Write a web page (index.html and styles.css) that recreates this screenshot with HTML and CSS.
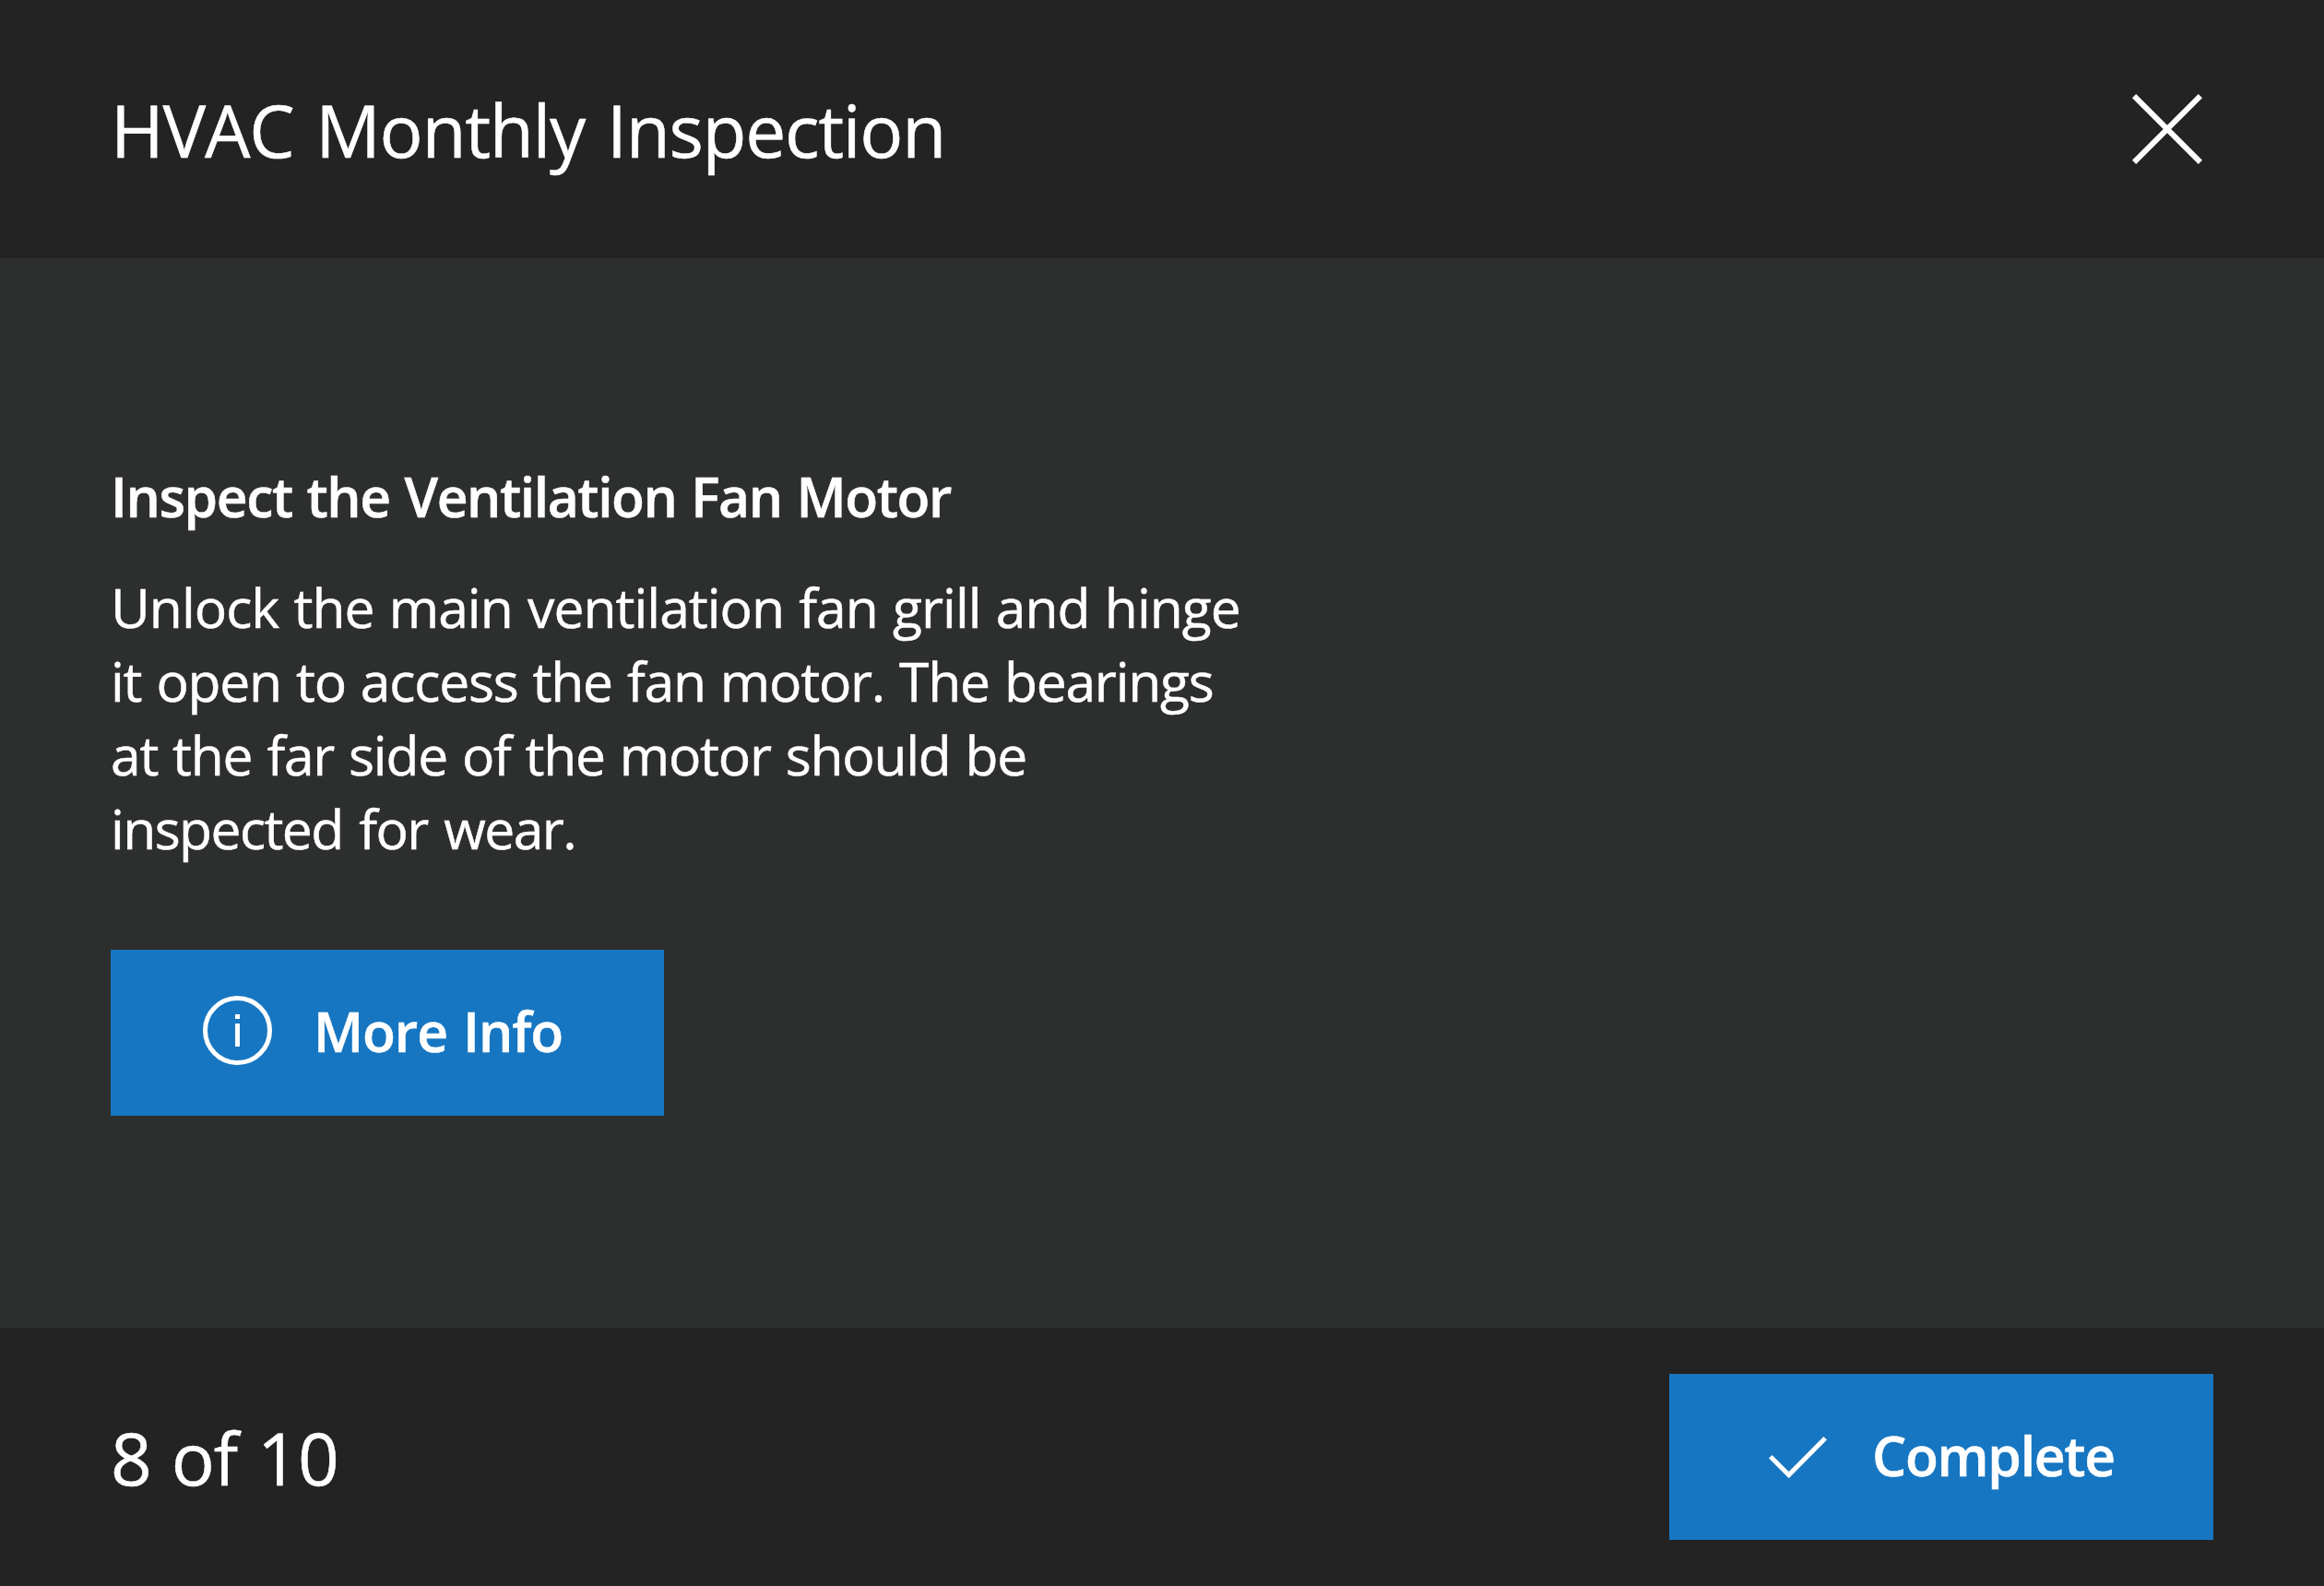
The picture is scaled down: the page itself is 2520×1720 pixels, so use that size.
FILE: index.html
```
<!DOCTYPE html>
<html lang="en">
<head>
<meta charset="utf-8">
<title>HVAC Monthly Inspection</title>
<link rel="stylesheet" href="styles.css">
</head>
<body>
<header class="bar">
  <h1 class="title">HVAC Monthly Inspection</h1>
  <button class="close" aria-label="Close"><svg width="76" height="76" viewBox="0 0 76 76"><path d="M2.100 2.100L73.900 73.900M73.900 2.100L2.100 73.900"/></svg></button>
</header>
<main class="content">
  <h2 class="step-title">Inspect the Ventilation Fan Motor</h2>
  <p class="description">
    <span class="line line-1">Unlock the main ventilation fan grill and hinge</span>
    <span class="line line-2">it open to access the fan motor. The bearings</span>
    <span class="line line-3">at the far side of the motor should be</span>
    <span class="line line-4">inspected for wear.</span>
  </p>
  <button class="action info"><svg width="75" height="75" viewBox="0 0 75 75"><circle cx="37.500" cy="37.500" r="35"/><path d="M37.500 20V25M37.500 30V55"/></svg><span class="label">More Info</span></button>
</main>
<footer class="bar">
  <span class="progress">8 of 10</span>
  <button class="action complete"><svg width="63" height="45" viewBox="0 0 63 45"><path d="M1.800 21.800L21.700 41.600L61.200 1.800"/></svg><span class="label">Complete</span></button>
</footer>
</body>
</html>
```
FILE: styles.css
```
* { box-sizing: border-box; margin: 0; padding: 0; }
body { width: 2520px; height: 1720px; display: flex; flex-direction: column; background: #2d2f2e; color: #fff; font-family: "Segoe UI", "Open Sans", "Noto Sans", sans-serif; -webkit-text-stroke: 0.5px #fff; }
.bar { height: 280px; background: #232323; padding: 0 120px; display: flex; align-items: center; justify-content: space-between; }
.title, .progress { font-size: 78.4px; font-weight: 400; white-space: nowrap; }
.title { letter-spacing: -1.3px; word-spacing: 5px; }
.progress { letter-spacing: -1px; word-spacing: 2.5px; }
.close { margin-right: 12px; }
.content { height: 1160px; padding: 218px 120px 0; }
.step-title { font-size: 58.8px; line-height: 80px; font-weight: 600; letter-spacing: -1.45px; word-spacing: 2px; }
.description { font-size: 58.8px; line-height: 80px; margin-top: 40px; white-space: nowrap; word-spacing: 2px; }
.line { display: block; }
.line-1 { letter-spacing: -1px; }
.line-2 { letter-spacing: -1.23px; }
.line-3 { letter-spacing: -1.26px; }
.line-4 { letter-spacing: -1.6px; word-spacing: 4px; }
button { border: 0; background: none; color: inherit; font: inherit; }
svg { display: block; fill: none; stroke: #fff; stroke-width: 5; }
.close svg { stroke-width: 6; }
.action { display: flex; align-items: center; height: 180px; background: #1776c1; font-size: 58.8px; font-weight: 600; }
.label { padding-bottom: 4px; }
.info { width: 600px; margin-top: 92px; padding-left: 100px; gap: 45px; letter-spacing: -1.1px; word-spacing: 3px; }
.info svg { margin-bottom: 5px; }
.complete { width: 590px; padding-left: 108px; gap: 49px; letter-spacing: -1.3px; }
.complete svg { margin-top: 1.6px; }
```
